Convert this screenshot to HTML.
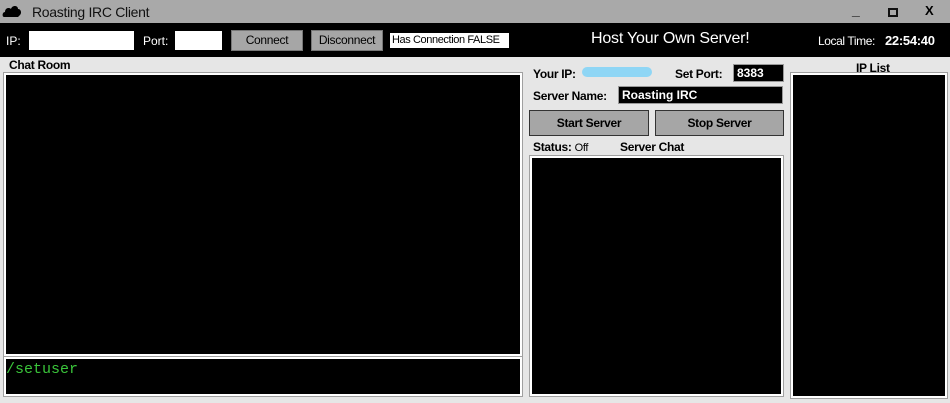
<!DOCTYPE html>
<html><head><style>
*{margin:0;padding:0;box-sizing:border-box}
body{width:950px;height:403px;background:#e6e6e6;font-family:"Liberation Sans",sans-serif;position:relative;overflow:hidden}
.a{position:absolute;white-space:nowrap}
.blk{background:#000;border:2px solid #fff;box-shadow:0 0 0 1px #a0a0a0}
.b{font-weight:bold;font-size:12px;color:#000;letter-spacing:-0.3px}
.btn{background:#a6a6a6;border:1px solid #777;font-size:12px;text-align:center;letter-spacing:-0.3px}
</style></head><body>
<div class="a" style="left:0;top:0;width:950px;height:23px;background:#a9a9a9"></div>
<svg class="a" style="left:2px;top:4px" width="20" height="14" viewBox="0 0 20 14"><path d="M2 13 C0 13 0 8 3 8 C3 4 7 3 9 5 C10 1 16 1 16 5 C19 5 20 9 18 11 L16 13 Z" fill="#000"/></svg>
<div class="a" style="left:32px;top:4px;font-size:14px;color:#111;letter-spacing:-0.3px">Roasting IRC Client</div>
<div class="a" style="left:852px;top:2px;font-size:14px;font-weight:bold">_</div>
<div class="a" style="left:888px;top:8px;width:10px;height:9px;border:2px solid #111"></div>
<div class="a" style="left:925px;top:3px;font-size:13px;font-weight:bold">X</div>
<div class="a" style="left:0;top:23px;width:950px;height:34px;background:#000"></div>
<div class="a" style="left:6px;top:34px;font-size:12px;color:#fff">IP:</div>
<div class="a" style="left:29px;top:31px;width:105px;height:19px;background:#fff"></div>
<div class="a" style="left:143px;top:34px;font-size:12px;color:#fff">Port:</div>
<div class="a" style="left:175px;top:31px;width:47px;height:19px;background:#fff"></div>
<div class="a btn" style="left:231px;top:30px;width:72px;height:21px;line-height:19px">Connect</div>
<div class="a btn" style="left:311px;top:30px;width:72px;height:21px;line-height:19px">Disconnect</div>
<div class="a" style="left:390px;top:33px;width:119px;height:15px;background:#fff;font-size:11px;line-height:15px;padding-left:2px;letter-spacing:-0.4px;overflow:hidden">Has Connection FALSE</div>
<div class="a" style="left:591px;top:30px;font-size:16px;color:#fff;letter-spacing:-0.2px">Host Your Own Server!</div>
<div class="a" style="left:818px;top:34px;font-size:12px;color:#fff;letter-spacing:-0.4px">Local Time:</div>
<div class="a" style="left:885px;top:33px;font-size:13px;color:#fff;font-weight:bold;letter-spacing:-0.3px">22:54:40</div>
<div class="a b" style="left:9px;top:58px">Chat Room</div>
<div class="a blk" style="left:4px;top:73px;width:518px;height:283px"></div>
<div class="a blk" style="left:4px;top:357px;width:518px;height:39px"></div>
<div class="a" style="left:6px;top:361px;font-family:'Liberation Mono',monospace;font-size:15px;color:#3ac43a">/setuser</div>
<div class="a b" style="left:533px;top:67px">Your IP:</div>
<div class="a" style="left:582px;top:67px;width:70px;height:10px;border-radius:5px;background:#8fd6f5"></div>
<div class="a b" style="left:675px;top:67px">Set Port:</div>
<div class="a" style="left:733px;top:64px;width:51px;height:18px;background:#000;border:1px solid #999;color:#fff;font-weight:bold;font-size:12px;padding-left:3px;line-height:16px">8383</div>
<div class="a b" style="left:533px;top:89px">Server Name:</div>
<div class="a" style="left:618px;top:86px;width:165px;height:18px;background:#000;border:1px solid #999;color:#fff;font-weight:bold;font-size:12px;padding-left:3px;line-height:16px">Roasting IRC</div>
<div class="a btn" style="left:529px;top:110px;width:120px;height:26px;line-height:24px;font-weight:bold;border:1px solid #333">Start Server</div>
<div class="a btn" style="left:655px;top:110px;width:129px;height:26px;line-height:24px;font-weight:bold;border:1px solid #333">Stop Server</div>
<div class="a b" style="left:533px;top:140px">Status: <span style="font-weight:normal;font-size:11px">Off</span></div>
<div class="a b" style="left:620px;top:140px">Server Chat</div>
<div class="a blk" style="left:530px;top:156px;width:253px;height:240px"></div>
<div class="a b" style="left:856px;top:61px">IP List</div>
<div class="a blk" style="left:791px;top:73px;width:156px;height:325px"></div>
</body></html>
